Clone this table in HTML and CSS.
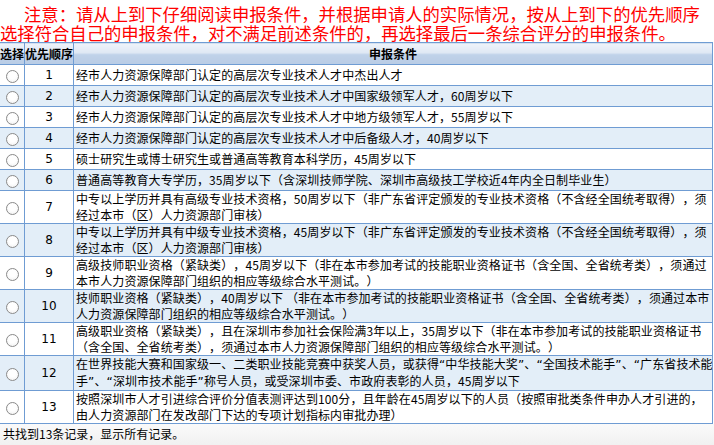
FILE: index.html
```html
<!DOCTYPE html>
<html lang="zh-CN">
<head>
<meta charset="utf-8">
<title>申报条件</title>
<link rel="stylesheet" href="styles.css">
</head>
<body>
<div class="notice">
  <div class="notice-line first">注意：请从上到下仔细阅读申报条件，并根据申请人的实际情况，按从上到下的优先顺序</div>
  <div class="notice-line">选择符合自己的申报条件，对不满足前述条件的，再选择最后一条综合评分的申报条件。</div>
</div>
<table class="grid">
  <thead>
    <tr>
      <th class="c-sel">选择</th>
      <th class="c-ord">优先顺序</th>
      <th class="c-cond">申报条件</th>
    </tr>
  </thead>
  <tbody>
    <tr class="single"><td class="c-sel"><span class="radio"></span></td><td class="c-ord">1</td><td class="c-cond">经市人力资源保障部门认定的高层次专业技术人才中杰出人才</td></tr>
    <tr class="single alt"><td class="c-sel"><span class="radio"></span></td><td class="c-ord">2</td><td class="c-cond">经市人力资源保障部门认定的高层次专业技术人才中国家级领军人才，60周岁以下</td></tr>
    <tr class="single"><td class="c-sel"><span class="radio"></span></td><td class="c-ord">3</td><td class="c-cond">经市人力资源保障部门认定的高层次专业技术人才中地方级领军人才，55周岁以下</td></tr>
    <tr class="single alt"><td class="c-sel"><span class="radio"></span></td><td class="c-ord">4</td><td class="c-cond">经市人力资源保障部门认定的高层次专业技术人才中后备级人才，40周岁以下</td></tr>
    <tr class="single"><td class="c-sel"><span class="radio"></span></td><td class="c-ord">5</td><td class="c-cond">硕士研究生或博士研究生或普通高等教育本科学历，45周岁以下</td></tr>
    <tr class="single alt"><td class="c-sel"><span class="radio"></span></td><td class="c-ord">6</td><td class="c-cond">普通高等教育大专学历，35周岁以下（含深圳技师学院、深圳市高级技工学校近4年内全日制毕业生）</td></tr>
    <tr><td class="c-sel"><span class="radio"></span></td><td class="c-ord">7</td><td class="c-cond">中专以上学历并具有高级专业技术资格，50周岁以下（非广东省评定颁发的专业技术资格（不含经全国统考取得），须<br>经过本市（区）人力资源部门审核）</td></tr>
    <tr class="alt"><td class="c-sel"><span class="radio"></span></td><td class="c-ord">8</td><td class="c-cond">中专以上学历并具有中级专业技术资格，45周岁以下（非广东省评定颁发的专业技术资格（不含经全国统考取得），须<br>经过本市（区）人力资源部门审核）</td></tr>
    <tr><td class="c-sel"><span class="radio"></span></td><td class="c-ord">9</td><td class="c-cond">高级技师职业资格（紧缺类），45周岁以下（非在本市参加考试的技能职业资格证书（含全国、全省统考类），须通过<br>本市人力资源保障部门组织的相应等级综合水平测试。）</td></tr>
    <tr class="alt"><td class="c-sel"><span class="radio"></span></td><td class="c-ord">10</td><td class="c-cond">技师职业资格（紧缺类），40周岁以下 （非在本市参加考试的技能职业资格证书（含全国、全省统考类），须通过本市<br>人力资源保障部门组织的相应等级综合水平测试。）</td></tr>
    <tr><td class="c-sel"><span class="radio"></span></td><td class="c-ord">11</td><td class="c-cond">高级职业资格（紧缺类），且在深圳市参加社会保险满3年以上，35周岁以下（非在本市参加考试的技能职业资格证书<br>（含全国、全省统考类），须通过本市人力资源保障部门组织的相应等级综合水平测试。）</td></tr>
    <tr class="alt"><td class="c-sel"><span class="radio"></span></td><td class="c-ord">12</td><td class="c-cond">在世界技能大赛和国家级一、二类职业技能竞赛中获奖人员，或获得<span class="q">“</span>中华技能大奖<span class="q">”</span>、<span class="q">“</span>全国技术能手<span class="q">”</span>、<span class="q">“</span>广东省技术能<br>手<span class="q">”</span>、<span class="q">“</span>深圳市技术能手<span class="q">”</span>称号人员，或受深圳市委、市政府表彰的人员，45周岁以下</td></tr>
    <tr><td class="c-sel"><span class="radio"></span></td><td class="c-ord">13</td><td class="c-cond">按照深圳市人才引进综合评价分值表测评达到100分，且年龄在45周岁以下的人员（按照审批类条件申办人才引进的，<br>由人力资源部门在发改部门下达的专项计划指标内审批办理）</td></tr>
  </tbody>
</table>
<div class="footer">共找到13条记录，显示所有记录。</div>
</body>
</html>
```
FILE: styles.css
```css
html, body {
  margin: 0;
  padding: 0;
  background: #ffffff;
}
body {
  width: 714px;
  height: 445px;
  overflow: hidden;
  font-family: "Noto Sans CJK SC", sans-serif;
  font-size: 12px;
  color: #000;
}
.notice,
.grid td,
.grid th,
.footer {
  text-spacing-trim: space-all;
}
.notice {
  padding-top: 4px;
  font-size: 13pt;
  color: #ff0000;
  white-space: nowrap;
}
.notice-line {
  height: 19px;
  line-height: 19px;
}
.notice-line.first {
  padding-left: 24px;
}
.grid {
  border-collapse: collapse;
  width: 713px;
  table-layout: fixed;
}
.grid th,
.grid td {
  border: 1px solid #6f9cd3;
  padding: 0;
  line-height: 16px;
}
.grid tr > :first-child {
  border-left: none;
}
.grid th {
  height: 21px;
  font-weight: bold;
  font-size: 12px;
  text-align: center;
  background: linear-gradient(#eff3fa 0%, #dfe8f4 45%, #c0d2e9 52%, #b9cce5 100%);
  white-space: nowrap;
}
.c-sel { width: 24px; }
.c-ord { width: 48px; }
.grid td.c-sel,
.grid td.c-ord {
  text-align: center;
  vertical-align: middle;
}
.grid td.c-ord {
  font-family: "DejaVu Sans", sans-serif;
  font-size: 12px;
}
.grid td.c-cond {
  padding-left: 2px;
  text-align: left;
  white-space: nowrap;
  overflow: hidden;
  letter-spacing: 0.1px;
}
.q {
  font-family: "DejaVu Sans", sans-serif;
}
.grid tr.single td {
  height: 20px;
}
.grid tbody tr {
  background: #ffffff;
}
.grid tbody tr.alt {
  background: #e3eef8;
}
.radio {
  display: inline-block;
  width: 11px;
  height: 11px;
  border: 1px solid #8a8a8a;
  border-radius: 50%;
  background: radial-gradient(circle at 50% 40%, #ffffff 40%, #eeeeee 100%);
  vertical-align: middle;
  box-sizing: content-box;
}
.footer {
  padding: 2px 0 0 3px;
  height: 30px;
  line-height: 16px;
  font-size: 12px;
  background: linear-gradient(#fafafa 0%, #ececec 100%);
}
```
